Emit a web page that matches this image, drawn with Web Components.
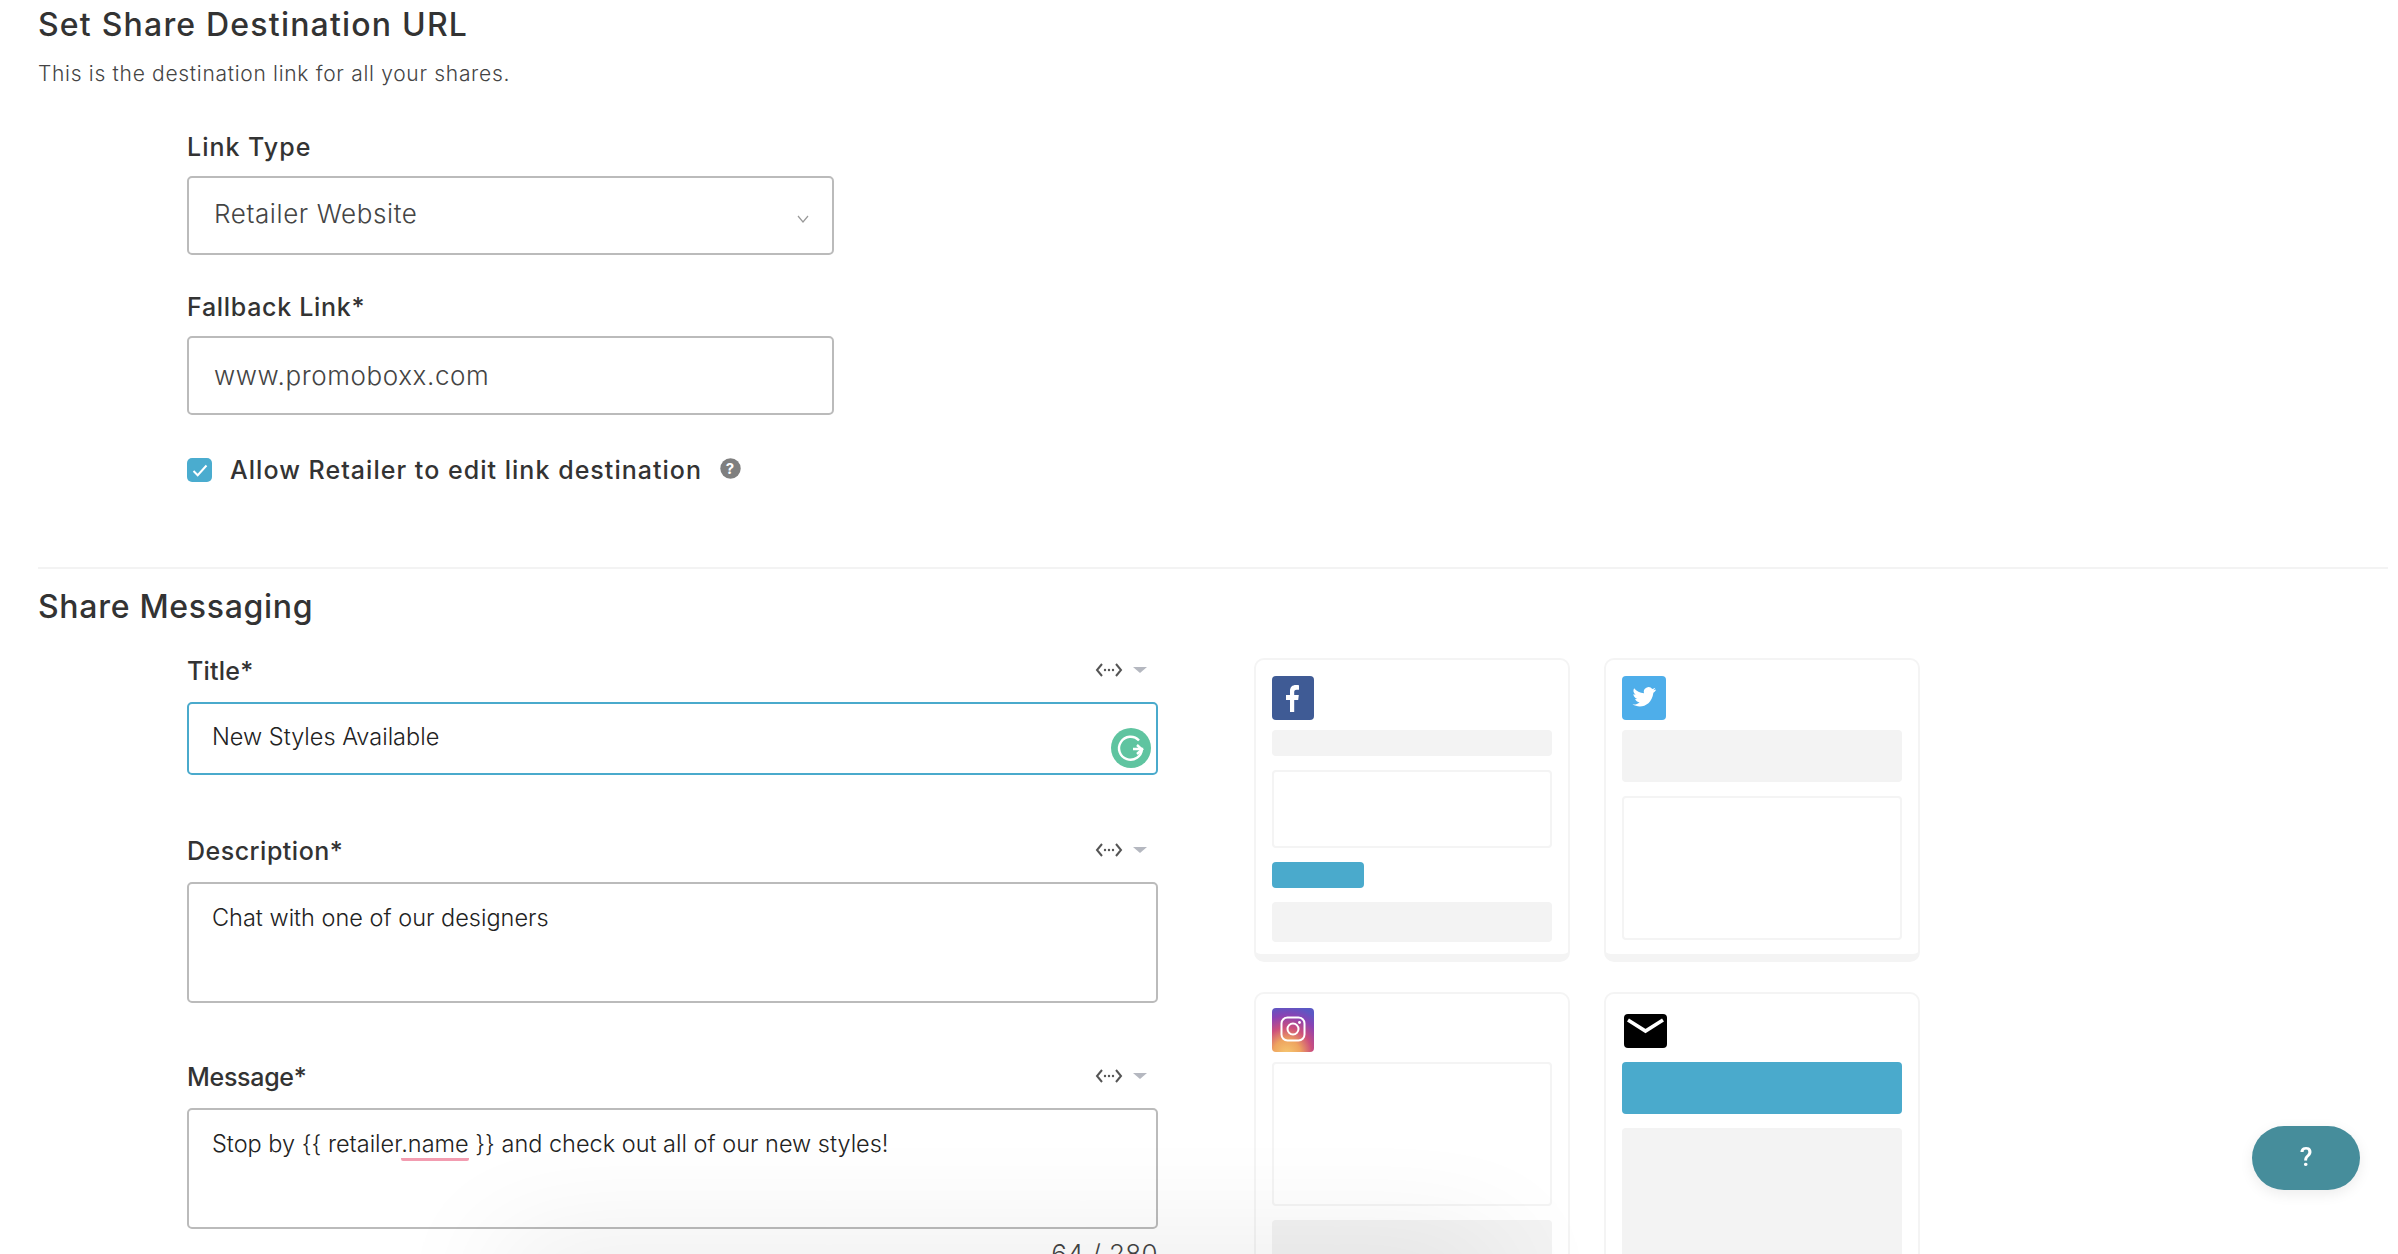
<!DOCTYPE html>
<html>
<head>
<meta charset="utf-8">
<title>Share settings</title>
<style>
  html, body { margin: 0; height: 100%; overflow: hidden; background: #fff; }
  body { font-family: Inter, "Liberation Sans", sans-serif; color: #333; }
</style>
</head>
<body>
<share-page>
  <section-head slot="destination" title="Set Share Destination URL" sub="This is the destination link for all your shares." style="--ls:1.2px"></section-head>
  <field-box slot="destination" label="Link Type" kind="select" value="Retailer Website"></field-box>
  <field-box slot="destination" label="Fallback Link*" value="www.promoboxx.com" style="--ls:.7px"></field-box>
  <check-row slot="destination">Allow Retailer to edit link destination</check-row>

  <section-head slot="messaging" title="Share Messaging" style="--ls:.7px"></section-head>
  <message-field slot="fields" label="Title*" height="73" gap="60" focused>New Styles Available</message-field>
  <message-field slot="fields" label="Description*" height="121" gap="58" style="--ls:.5px">Chat with one of our designers</message-field>
  <message-field slot="fields" label="Message*" height="121" style="--ls:-.3px">Stop by {{ retailer<u>.name</u> }} and check out all of our new styles!</message-field>
  <span slot="fields" class="count">64 / 280</span>

  <preview-card slot="cards" net="facebook">
    <preview-block tone="gray" h="26"></preview-block>
    <preview-block tone="line" h="78"></preview-block>
    <preview-block tone="blue" h="26" w="92"></preview-block>
    <preview-block tone="gray" h="40"></preview-block>
  </preview-card>
  <preview-card slot="cards" net="twitter">
    <preview-block tone="gray" h="52"></preview-block>
    <preview-block tone="line" h="144"></preview-block>
  </preview-card>
  <preview-card slot="cards" net="instagram" style="--pad:14px">
    <preview-block tone="line" h="144"></preview-block>
    <preview-block tone="gray" h="60"></preview-block>
  </preview-card>
  <preview-card slot="cards" net="email" style="--pad:14px">
    <preview-block tone="blue" h="52"></preview-block>
    <preview-block tone="gray" h="200"></preview-block>
  </preview-card>
</share-page>
<help-button>?</help-button>
<bottom-glow></bottom-glow>

<script>
class SharePage extends HTMLElement {
  constructor() {
    super();
    this.attachShadow({mode: 'open'});
    this.shadowRoot.innerHTML = `
    <style>
      :host { display: block; height: 1254px; overflow: hidden; padding-left: 38px; box-sizing: border-box; }
      .destination { display: block; height: 567px; }
      .rule { height: 2px; background: #f3f3f3; margin-right: 10px; }
      .columns { display: flex; margin-left: 149px; margin-top: 30px; }
      .fields { width: 971px; flex: none; }
      .cards { margin-left: 96px; display: grid; grid-template-columns: 316px 316px; grid-auto-rows: 304px; column-gap: 34px; row-gap: 30px; align-content: start; margin-top: 3px; }
      ::slotted(.count) { display: block; text-align: right; font: 300 26px/32px Inter, sans-serif; letter-spacing: .4px; color: #444; margin-top: 9px; }
    </style>
    <div class="destination"><slot name="destination"></slot></div>
    <div class="rule"></div>
    <slot name="messaging"></slot>
    <div class="columns">
      <div class="fields"><slot name="fields"></slot></div>
      <div class="cards"><slot name="cards"></slot></div>
    </div>
    `;
  }
}

class SectionHead extends HTMLElement {
  constructor() {
    super();
    this.attachShadow({mode: 'open'});
  }
  connectedCallback() {
    const sub = this.getAttribute('sub');
    this.shadowRoot.innerHTML = `
    <style>
      :host { display: block; padding-top: ${sub ? 7 : 20}px; }
      h2 { margin: 0; font: 500 32px/36px Inter, sans-serif; letter-spacing: var(--ls, 1px); color: #333; }
      p { margin: 18px 0 0; font: 300 21px/26px Inter, sans-serif; letter-spacing: .7px; color: #444; }
    </style>
    <h2>${this.getAttribute('title')}</h2>
    ${sub ? `<p>${sub}</p>` : ''}
    `;
  }
}

class FieldBox extends HTMLElement {
  constructor() {
    super();
    this.attachShadow({mode: 'open'});
  }
  connectedCallback() {
    const isSelect = this.getAttribute('kind') === 'select';
    this.shadowRoot.innerHTML = `
    <style>
      :host { display: block; width: 647px; margin-left: 149px; margin-top: ${isSelect ? 44 : 36}px; }
      label { display: block; font: 500 25px/32px Inter, sans-serif; letter-spacing: var(--ls, 1px); color: #333; margin-bottom: 13px; }
      .box { height: 79px; box-sizing: border-box; border: 2px solid #bbb; border-radius: 5px; display: flex; align-items: center; justify-content: space-between; padding: 0 23px ${isSelect ? 4 : 0}px 25px; font: 300 26px/32px Inter, sans-serif; letter-spacing: .6px; color: #444; }
      svg { display: block; }
    </style>
    <label>${this.getAttribute('label')}</label>
    <div class="box">
      <span>${this.getAttribute('value')}</span>
      ${isSelect ? `<svg width="12" height="8" viewBox="0 0 12 8" style="margin-top:10px"><path d="M1 1l5 6 5-6" fill="none" stroke="#999" stroke-width="1.2"/></svg>` : ''}
    </div>
    `;
  }
}

class CheckRow extends HTMLElement {
  constructor() {
    super();
    this.attachShadow({mode: 'open'});
    this.shadowRoot.innerHTML = `
    <style>
      :host { display: flex; align-items: center; margin: 41px 0 0 149px; height: 28px; font: 500 25px/28px Inter, sans-serif; letter-spacing: 1.03px; color: #333; }
      .tick { width: 25px; height: 24px; border-radius: 5px; background: #4aaccf; margin-right: 18px; display: flex; align-items: center; justify-content: center; }
      .help { margin-left: 18px; margin-top: -4px; display: block; }
    </style>
    <span class="tick"><svg width="16" height="13" viewBox="0 0 16 13"><path d="M1.5 7l4.200 4.200 8.800-9.700" fill="none" stroke="#fff" stroke-width="2"/></svg></span>
    <slot></slot>
    <svg class="help" width="21" height="21" viewBox="0 0 21 21">
      <circle cx="10.500" cy="10.500" r="10.200" fill="#7f7f7f"/>
      <text x="10.500" y="16" text-anchor="middle" font-family="Inter, sans-serif" font-weight="700" font-size="15" fill="#fff">?</text>
    </svg>
    `;
  }
}

class MessageField extends HTMLElement {
  constructor() {
    super();
    this.attachShadow({mode: 'open'});
  }
  connectedCallback() {
    const focused = this.hasAttribute('focused');
    this.shadowRoot.innerHTML = `
    <style>
      :host { display: block; margin-bottom: ${this.getAttribute('gap') || 0}px; }
      .top { display: flex; align-items: center; justify-content: space-between; height: 32px; margin-bottom: 15px; }
      label { font: 500 25px/32px Inter, sans-serif; letter-spacing: var(--ls, .2px); color: #333; }
      .vars { display: flex; align-items: center; gap: 10px; padding-right: 11px; margin-top: -3px; }
      .box { position: relative; box-sizing: border-box; height: ${this.getAttribute('height')}px; border: 2px solid ${focused ? '#4aaacc' : '#bbb'}; border-radius: 5px; padding: ${focused ? 18 : 19}px 23px; font: 300 23.5px/30px Inter, sans-serif; color: #222; }
      ::slotted(u) { text-decoration: none; border-bottom: 3px solid #f29cb0; border-radius: 2px; }
      .grammarly { position: absolute; right: 5px; bottom: 5px; width: 40px; height: 40px; }
    </style>
    <div class="top">
      <label>${this.getAttribute('label')}</label>
      <span class="vars">
        <svg width="28" height="16" viewBox="0 0 28 16"><path d="M7 2L2 8l5 6M21 2l5 6-5 6" fill="none" stroke="#555" stroke-width="2"/><circle cx="10" cy="8" r="1.200" fill="#555"/><circle cx="14" cy="8" r="1.200" fill="#555"/><circle cx="18" cy="8" r="1.200" fill="#555"/></svg>
        <svg width="14" height="6" viewBox="0 0 14 6"><path d="M0 0h14L7 6z" fill="#b5b8c0"/></svg>
      </span>
    </div>
    <div class="box">
      <slot></slot>
      ${focused ? `<svg class="grammarly" viewBox="0 0 40 40"><circle cx="20" cy="20" r="20" fill="#5fc4a0"/><path d="M28 12.500A11.500 11.500 0 1 0 31 21h-9" fill="none" stroke="#fff" stroke-width="2.400"/><path d="M26 17l5 4.500-5 4.500" fill="none" stroke="#fff" stroke-width="2.400"/></svg>` : ''}
    </div>
    `;
  }
}

const NET_ICONS = {
  facebook: `<svg width="42" height="44" viewBox="0 0 42 44"><rect width="42" height="44" rx="4" fill="#3f5b95"/><path d="M18 36V24h-4v-5h4v-4c0-4 2.400-6 5.800-6 1.600 0 3 .1 3.200.2v4.500h-2.500c-1.800 0-2.300 1-2.300 2.400V19h4.600l-.6 5h-4v12z" fill="#fff"/></svg>`,
  twitter: `<svg width="44" height="44" viewBox="0 0 44 44"><rect width="44" height="44" rx="4" fill="#4eaeea"/><path d="M34 13.500c-.9.400-1.800.7-2.800.8 1-.6 1.800-1.500 2.100-2.600-.9.600-2 1-3 1.200a4.800 4.800 0 0 0-8.300 4.400c-4-.2-7.500-2.100-9.900-5-1.300 2.200-.7 5 1.500 6.400-.8 0-1.500-.2-2.200-.6 0 2.400 1.700 4.300 3.900 4.800-.7.200-1.400.2-2.200.1.600 1.900 2.400 3.300 4.500 3.400-2 1.600-4.600 2.300-7.100 1.900 7.500 4.800 19.200 1.700 20.900-11.600.9-.7 1.700-1.400 2.300-2.300z" fill="#fff"/></svg>`,
  instagram: `<svg width="42" height="44" viewBox="0 0 42 44"><defs><radialGradient id="ig" cx="35%" cy="105%" r="110%"><stop offset="0" stop-color="#f6c871"/><stop offset=".3" stop-color="#eea45f"/><stop offset=".55" stop-color="#cc4f7c"/><stop offset=".8" stop-color="#8a42b4"/><stop offset="1" stop-color="#5b58c4"/></radialGradient></defs><rect width="42" height="44" rx="4" fill="url(#ig)"/><rect x="9.500" y="9.500" width="23" height="23" rx="6" fill="none" stroke="#fff" stroke-width="2"/><circle cx="21" cy="21" r="5.500" fill="none" stroke="#fff" stroke-width="2"/><circle cx="27.500" cy="14.500" r="1.400" fill="#fff"/></svg>`,
  email: `<svg width="43" height="34" viewBox="0 0 43 34"><rect width="43" height="34" rx="4" fill="#000"/><path d="M4 6l17.500 11L39 6" fill="none" stroke="#fff" stroke-width="3.600"/></svg>`
};

class PreviewCard extends HTMLElement {
  constructor() {
    super();
    this.attachShadow({mode: 'open'});
  }
  connectedCallback() {
    const net = this.getAttribute('net');
    const icon = net === 'email' ? 'margin: 6px 0 14px 2px; height: 34px;' : 'margin-bottom: 10px; height: 44px;';
    this.shadowRoot.innerHTML = `
    <style>
      :host { display: block; box-sizing: border-box; border: 2px solid #f4f4f4; border-bottom-width: 8px; border-radius: 10px; padding: var(--pad, 16px) 16px 0; background: #fff; }
      .icon { ${icon} }
      svg { display: block; }
      .stack { display: flex; flex-direction: column; gap: 14px; }
    </style>
    <div class="icon">${NET_ICONS[net]}</div>
    <div class="stack"><slot></slot></div>
    `;
  }
}

class PreviewBlock extends HTMLElement {
  constructor() {
    super();
    this.attachShadow({mode: 'open'});
  }
  connectedCallback() {
    const tone = this.getAttribute('tone');
    const w = this.getAttribute('w');
    const look = {
      gray: 'background: #f3f3f3;',
      blue: 'background: #4aaacc;',
      line: 'border: 2px solid #f4f4f4;'
    }[tone];
    this.shadowRoot.innerHTML = `
    <style>
      :host { display: block; box-sizing: border-box; flex: none; border-radius: 4px; height: ${this.getAttribute('h')}px; ${w ? `width: ${w}px;` : ''} ${look} }
    </style>
    `;
  }
}

class HelpButton extends HTMLElement {
  constructor() {
    super();
    this.attachShadow({mode: 'open'});
    this.shadowRoot.innerHTML = `
    <style>
      :host { position: fixed; left: 2252px; top: 1126px; width: 108px; height: 64px; border-radius: 32px; background: #468d9b; color: #fff; font: 500 26px/62px Roboto, sans-serif; text-align: center; box-shadow: 0 4px 14px rgba(0,0,0,.08); }
    </style>
    <slot></slot>
    `;
  }
}

// shadow of a bar that sits just under the fold
class BottomGlow extends HTMLElement {
  constructor() {
    super();
    this.attachShadow({mode: 'open'});
    this.shadowRoot.innerHTML = `
    <style>
      :host { position: fixed; left: 500px; top: 1254px; width: 1000px; height: 60px; box-shadow: 0 0 120px rgba(0,0,0,.12); }
    </style>
    `;
  }
}

customElements.define('share-page', SharePage);
customElements.define('section-head', SectionHead);
customElements.define('field-box', FieldBox);
customElements.define('check-row', CheckRow);
customElements.define('message-field', MessageField);
customElements.define('preview-card', PreviewCard);
customElements.define('preview-block', PreviewBlock);
customElements.define('help-button', HelpButton);
customElements.define('bottom-glow', BottomGlow);
</script>
</body>
</html>
